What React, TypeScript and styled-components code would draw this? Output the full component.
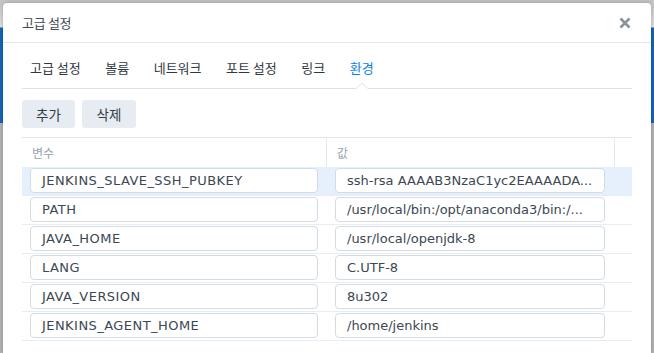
import React from "react";
import styled, { createGlobalStyle } from "styled-components";

const GlobalStyle = createGlobalStyle`
  html, body { margin: 0; padding: 0; }
  body {
    font-family: "DejaVu Sans", "Noto Sans CJK KR", sans-serif;
    background: #b4b4b4;
  }
  * { box-sizing: border-box; }
`;

const Backdrop = styled.div`
  width: 654px;
  height: 353px;
  overflow: hidden;
  padding: 3px 3px 0 3px;
  background: linear-gradient(
    to bottom,
    #c4c4c4 0px,
    #e2e2e2 27px,
    #1565b9 28px,
    #1565b9 123px,
    #b4b4b4 123px
  );
`;

const Dialog = styled.div`
  background: #fff;
  height: 100%;
  border-radius: 4px 4px 0 0;
  box-shadow: 0 0 4px rgba(0, 0, 0, 0.25);
  display: flex;
  flex-direction: column;
`;

const Header = styled.div`
  height: 40px;
  flex: none;
  display: flex;
  align-items: center;
  justify-content: space-between;
  padding: 0 19px 1px 19px;
  border-bottom: 1px solid #dfe6ee;
`;

const Title = styled.div`
  font-family: "Noto Sans CJK KR", sans-serif;
  font-size: 13px;
  color: #414b55;
  letter-spacing: -0.3px;
`;

const CloseButton = styled.button`
  border: 0;
  background: none;
  padding: 0;
  margin: 1px 0 0 0;
  width: 14px;
  height: 14px;
  display: flex;
  align-items: center;
  justify-content: center;
  cursor: pointer;
`;

const Body = styled.div`
  padding: 0 19px;
  display: flex;
  flex-direction: column;
`;

const TabBar = styled.div`
  height: 46px;
  display: flex;
  align-items: flex-end;
  gap: 24.5px;
  border-bottom: 1px solid #d9e2ec;
  padding-left: 8px;
`;

const Tab = styled.div<{ $active?: boolean }>`
  position: relative;
  font-family: "Noto Sans CJK KR", sans-serif;
  font-size: 13px;
  padding: 0 0 11px 0;
  color: ${(p) => (p.$active ? "#0a82e6" : "#2f3840")};
  white-space: nowrap;

  ${(p) =>
    p.$active
      ? `
    &::before, &::after {
      content: "";
      position: absolute;
      left: 50%;
      width: 0;
      height: 0;
      border-style: solid;
      transform: translateX(-50%);
    }
    &::before {
      bottom: -1px;
      border-width: 0 7px 6px 7px;
      border-color: transparent transparent #d9e2ec transparent;
    }
    &::after {
      bottom: -1px;
      border-width: 0 6px 5px 6px;
      border-color: transparent transparent #fff transparent;
    }
  `
      : ""}
`;

const Toolbar = styled.div`
  display: flex;
  gap: 7px;
  padding-top: 11px;
  padding-bottom: 9px;
`;

const ToolButton = styled.button<{ $w: number }>`
  height: 28px;
  width: ${(p) => p.$w}px;
  border: 0;
  border-radius: 3px;
  background: #e6ecf2;
  color: #333c45;
  font-family: "Noto Sans CJK KR", sans-serif;
  font-size: 13.5px;
  padding: 0;
  cursor: pointer;
`;

const Table = styled.div`
  display: flex;
  flex-direction: column;
  border-top: 1px solid #dde4ec;
`;

const HeaderRow = styled.div`
  display: grid;
  grid-template-columns: 305px 288px 17px;
  height: 29px;
`;

const HeaderCell = styled.div<{ $last?: boolean }>`
  font-family: "Noto Sans CJK KR", sans-serif;
  font-size: 12px;
  color: #9aa4ae;
  display: flex;
  align-items: center;
  padding-left: 10px;
  border-right: ${(p) => (p.$last ? "0" : "1px solid #e6e9ec")};
`;

const Row = styled.div<{ $selected?: boolean }>`
  display: grid;
  grid-template-columns: 305px 288px 17px;
  height: 29px;
  padding: 1px 0 2px 0;
  border-bottom: 1px solid #e8edf2;
  background: ${(p) => (p.$selected ? "#e5f0fc" : "#fff")};
`;

const Cell = styled.div<{ $pl: number; $pr: number }>`
  padding: 0 ${(p) => p.$pr}px 0 ${(p) => p.$pl}px;
  display: flex;
`;

const Field = styled.div<{ $caps?: boolean }>`
  flex: 1;
  height: 25px;
  border: 1px solid #d3dce5;
  border-radius: 4px;
  background: #fff;
  padding: 0 11px;
  display: flex;
  align-items: center;
  font-family: "DejaVu Sans", sans-serif;
  font-size: 13px;
  letter-spacing: ${(p) => (p.$caps ? "0.45px" : "0")};
  color: #3c4752;
  white-space: nowrap;
  overflow: hidden;
`;

const CloseIcon = () => (
  <svg width="12" height="12" viewBox="0 0 12 12">
    <path
      d="M1.5 1.5 L10.5 10.5 M10.5 1.5 L1.5 10.5"
      stroke="#8a939c"
      strokeWidth="2.6"
      strokeLinecap="butt"
    />
  </svg>
);

const tabs = ["고급 설정", "볼륨", "네트워크", "포트 설정", "링크", "환경"];

const rows: [string, string][] = [
  ["JENKINS_SLAVE_SSH_PUBKEY", "ssh-rsa AAAAB3NzaC1yc2EAAAADA..."],
  ["PATH", "/usr/local/bin:/opt/anaconda3/bin:/..."],
  ["JAVA_HOME", "/usr/local/openjdk-8"],
  ["LANG", "C.UTF-8"],
  ["JAVA_VERSION", "8u302"],
  ["JENKINS_AGENT_HOME", "/home/jenkins"],
];

export default function App() {
  return (
    <>
      <GlobalStyle />
      <Backdrop>
        <Dialog>
          <Header>
            <Title>고급 설정</Title>
            <CloseButton aria-label="close">
              <CloseIcon />
            </CloseButton>
          </Header>
          <Body>
            <TabBar>
              {tabs.map((t, i) => (
                <Tab key={t} $active={i === tabs.length - 1}>
                  {t}
                </Tab>
              ))}
            </TabBar>
            <Toolbar>
              <ToolButton $w={53}>추가</ToolButton>
              <ToolButton $w={54}>삭제</ToolButton>
            </Toolbar>
            <Table>
              <HeaderRow>
                <HeaderCell>변수</HeaderCell>
                <HeaderCell>값</HeaderCell>
                <HeaderCell $last />
              </HeaderRow>
              {rows.map(([k, v], i) => (
                <Row key={k} $selected={i === 0}>
                  <Cell $pl={8} $pr={9}>
                    <Field $caps>{k}</Field>
                  </Cell>
                  <Cell $pl={8} $pr={10}>
                    <Field>{v}</Field>
                  </Cell>
                  <div />
                </Row>
              ))}
            </Table>
          </Body>
        </Dialog>
      </Backdrop>
    </>
  );
}
